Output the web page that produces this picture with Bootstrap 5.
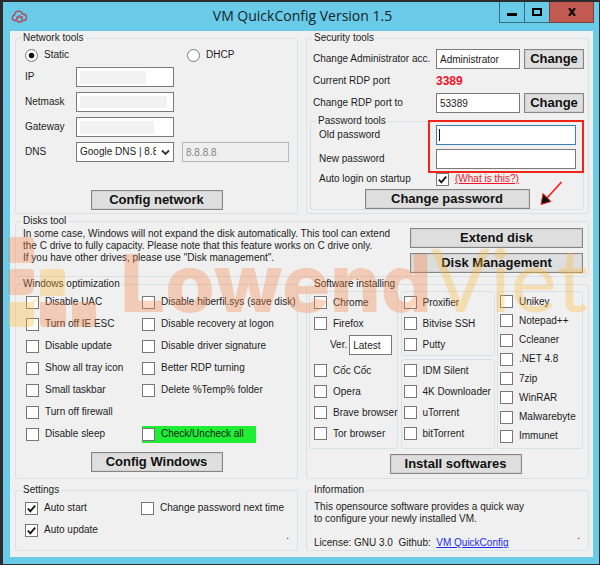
<!DOCTYPE html>
<html lang="en">
<head>
<meta charset="utf-8">
<meta name="viewport" content="width=device-width, initial-scale=1">
<title>VM QuickConfig Version 1.5</title>
<link href="https://cdn.jsdelivr.net/npm/bootstrap@5.3.0/dist/css/bootstrap.min.css" rel="stylesheet">
<style>
body { background: #2c2c2f; font: 10px/14px "Liberation Sans", Arial, sans-serif; color: #1c1c1c; padding: 2px 1px 1px 3px; }
.win { background: #6acbe8; }
.titlebar { display: grid; grid-template-columns: 1fr auto 1fr; height: 29px; padding: 0 5px 0 8px; }
.titlebar h1 { font: 14px/28px "Open Sans", "Noto Sans", sans-serif; color: #14242a; }
.winbtns button { height: 21px; width: 26px; padding: 0; border: 1px solid #3a6f80; border-top: 0; background: transparent; margin-left: -1px; display: flex; align-items: center; justify-content: center; }
.winbtns button.close-win { width: 45px; background: #c35a52; border-color: #7b3f3c; }
.client { background: #f0f0f0; margin: 0 6px 0 7px; padding: 0 4px 6px 5px; }
.frame { border-bottom: 7px solid #6acbe8; }
.group { border: 1px solid #d6e1e8; border-radius: 3px; min-width: 0; }
.group > legend { float: none; width: auto; font-size: 10px; line-height: 14px; margin: 0 0 0 5px; padding: 0 2px; }
.side { flex: 1 1 0; }
.txt, .pick { height: 20px; border: 1px solid #7a7a7a; border-radius: 0; padding: 0 3px; font-size: 10px; line-height: 18px; color: #1c1c1c; background-color: #fff; min-width: 0; }
.txt:disabled { background: #efefef; border-color: #b5b8bd; color: #858585; }
.txt:focus { outline: 0; }
.txt.current { border-color: #3f7fae; background: linear-gradient(#111, #111) 2px 3px / 1px 12px no-repeat #fff; }
.hid { background: linear-gradient(#f2f2f2, #f2f2f2) 3px 3px / 66px 13px no-repeat #fff; }
.hid-wide { background-size: 87px 12px; }
.hid-mid { background-size: 74px 13px; }
.pick { padding-right: 17px; background-size: 9px 7px; background-position: right 3px center; background-image: url("data:image/svg+xml,%3Csvg xmlns='http://www.w3.org/2000/svg' viewBox='0 0 9 7'%3E%3Cpath d='M1 1.5l3.5 3.5L8 1.5' fill='none' stroke='%23333' stroke-width='1.8'/%3E%3C/svg%3E"); text-overflow: clip; }
.cmd { border: 1px solid #858585; border-radius: 0; background: #dedede; color: #111; font: bold 13px/18px "Liberation Sans", Arial, sans-serif; padding: 0; height: 20px; box-shadow: inset 0 0 0 1px #d2d2d2; }
.cmd-mid { width: 132px; }
.cmd-small { width: 60px; }
.cmd-pass { width: 165px; }
.netgrid { display: grid; grid-template-columns: 51px 98px 1fr; row-gap: 5px; align-items: center; }
.netbody { padding: 0 8px 0 9px; }
.choices { height: 22px; display: grid; grid-template-columns: 162px 1fr; }
.tick { display: flex; align-items: center; gap: 6px; min-height: 0; margin: 0; padding: 0; white-space: nowrap; }
.tick .form-check-input { float: none; margin: 0; width: 13px; height: 13px; flex: none; border: 1px solid #777; background-color: #fff; }
.form-check-input[type=checkbox] { border-radius: 0; }
.form-check-input[type=checkbox]:checked { background-color: #fff; border-color: #777; background-image: url("data:image/svg+xml,%3Csvg xmlns='http://www.w3.org/2000/svg' viewBox='0 0 12 12'%3E%3Cpath d='M2 6l2.7 3L10 2.8' fill='none' stroke='%23111' stroke-width='2'/%3E%3C/svg%3E"); }
.form-check-input[type=radio]:checked { background-color: #fff; border-color: #777; background-image: url("data:image/svg+xml,%3Csvg xmlns='http://www.w3.org/2000/svg' viewBox='0 0 12 12'%3E%3Ccircle cx='6' cy='6' r='3' fill='%23111'/%3E%3C/svg%3E"); }
.choices .tick { height: 20px; }
.secgrid { padding: 3px 0 0 6px; }
.secrow { display: grid; grid-template-columns: 119px 84px 60px; column-gap: 4px; height: 22px; align-items: center; }
.port { color: #f0142a; font: bold 12px/16px "Liberation Sans", Arial, sans-serif; }
.passgroup { margin: 0 4px 3px 3px; }
.passbody { margin-top: -5px; }
.passrow { display: grid; grid-template-columns: 117px 1fr; height: 24px; align-items: center; padding: 0 7px 0 8px; }
.autorow { height: 18px; padding-bottom: 2px; }
.ring { position: absolute; left: 117px; right: -1px; top: -3px; height: 53px; border: 2px solid #f0251a; pointer-events: none; }
.pointer { position: absolute; right: 20px; bottom: 2px; width: 24px; height: 28px; }
.warn { color: #f0142a; text-decoration: underline; }
.info-link { color: #1a2bf0; text-decoration: underline; }
.note { line-height: 12px; }
.diskbody { padding: 0 5px 3px 7px; }
.diskcmds { width: 173px; flex: none; gap: 5px; }
.opts { display: grid; grid-template-columns: 116px 1fr; padding: 0 0 7px 10px; }
.opts .tick { height: 22px; }
.opts .all { background: #1fee35; height: 17px; width: 114px; align-self: center; }
.soft { display: grid; grid-template-columns: 89px 94px 86px; justify-content: space-between; height: 158px; margin: 0 5px 5px 2px; }
.subbox { border: 1px solid #d6e1e8; border-radius: 3px; }
.list { padding-left: 4px; }
.list-mid { padding-left: 2px; }
.list .tick { height: 21px; }
.list-tight { padding: 0 0 2px 2px; }
.list-tight .tick { flex: 1 1 0; }
.ver { padding-left: 16px; gap: 2px; height: 22px; }
.ver .txt { width: 43px; }
.lastrow { margin-top: 4px; }
.sets { display: grid; grid-template-columns: 116px 1fr; padding: 0 0 9px 9px; }
.sets .tick { height: 22px; }
.infobody { padding: 4px 7px 0; }
.watermark { position: absolute; left: 0; top: 225px; width: 100%; pointer-events: none; }
.dotmark { position: absolute; right: 8px; top: 32px; }
</style>
<script src="https://cdn.jsdelivr.net/npm/bootstrap@5.3.0/dist/js/bootstrap.bundle.min.js"></script>
</head>
<body>
<main class="win">
  <header class="titlebar">
    <div class="d-flex align-items-center">
      <svg width="17" height="14" viewBox="0 0 17 14" fill="none" stroke="#b5415a" stroke-width="1.3" aria-hidden="true"><path d="M5 10.5H3.6A2.7 2.7 0 0 1 3.4 5.200C3.700 2.500 5.500 1.200 7.600 1.200c2 0 3.400 1 4 2.800 2.200 0 3.900 1.200 3.900 3.500 0 1.800-1.200 3-3 3H12"/><circle cx="8.500" cy="9.500" r="2.700"/><path d="M5.500 6.500l1 1M11.500 6.500l-1 1M8.500 5v2"/></svg>
    </div>
    <h1 class="m-0">VM QuickConfig Version 1.5</h1>
    <div class="winbtns d-flex justify-content-end">
      <button type="button" aria-label="Minimize"><svg width="10" height="12"><path d="M0 8.500h10" stroke="#000" stroke-width="3"/></svg></button>
      <button type="button" aria-label="Maximize"><svg width="10" height="8"><rect x="1" y="1" width="8" height="6" fill="none" stroke="#000" stroke-width="2"/></svg></button>
      <button type="button" class="close-win" aria-label="Close"><svg width="8" height="8"><path d="M1 0l6 8M7 0L1 8" stroke="#111" stroke-width="2.200"/></svg></button>
    </div>
  </header>
  <div class="frame">
  <div class="client">
    <div class="d-flex gap-2">
      <fieldset class="group side">
        <legend>Network tools</legend>
        <div class="netbody">
          <div class="choices">
            <div class="form-check tick"><input class="form-check-input" type="radio" name="mode" id="static" checked><label class="form-check-label" for="static">Static</label></div>
            <div class="form-check tick"><input class="form-check-input" type="radio" name="mode" id="dhcp"><label class="form-check-label" for="dhcp">DHCP</label></div>
          </div>
          <div class="netgrid">
            <label for="ip">IP</label><input class="txt hid" id="ip" type="text"><span></span>
            <label for="mask">Netmask</label><input class="txt hid hid-wide" id="mask" type="text"><span></span>
            <label for="gw">Gateway</label><input class="txt hid hid-mid" id="gw" type="text"><span></span>
            <label for="dns">DNS</label><select class="form-select pick" id="dns"><option>Google DNS | 8.8.8.8</option></select><input class="txt ms-2" type="text" value="8.8.8.8" aria-label="DNS address" disabled>
          </div>
        </div>
        <div class="text-center pt-4"><button type="button" class="btn cmd cmd-mid mt-1">Config network</button></div>
      </fieldset>
      <fieldset class="group side">
        <legend>Security tools</legend>
        <div class="secgrid">
          <div class="secrow"><label for="adm">Change Administrator acc.</label><input class="txt" id="adm" type="text" value="Administrator"><button type="button" class="btn cmd cmd-small">Change</button></div>
          <div class="secrow"><span>Current RDP port</span><strong class="port">3389</strong></div>
          <div class="secrow"><label for="port">Change RDP port to</label><input class="txt" id="port" type="text" value="53389"><button type="button" class="btn cmd cmd-small">Change</button></div>
        </div>
        <fieldset class="group passgroup">
          <legend>Password tools</legend>
          <div class="passbody position-relative">
            <div class="passrow"><label for="old">Old password</label><input class="txt current" id="old" type="password"></div>
            <div class="passrow"><label for="new">New password</label><input class="txt" id="new" type="password"></div>
            <div class="passrow autorow"><label for="auto">Auto login on startup</label><div class="tick"><input class="form-check-input" type="checkbox" id="auto" checked><a class="warn" href="#">(What is this?)</a></div></div>
            <div class="text-center"><button type="button" class="btn cmd cmd-pass">Change password</button></div>
            <div class="ring"></div>
            <svg class="pointer" viewBox="0 0 24 28" aria-hidden="true"><path d="M22.500 3L8 19" stroke="#f0251a" stroke-width="1.800"/><path d="M2 25.500L4 14.500 12 22.500z" fill="#111" stroke="#f0251a" stroke-width="1"/></svg>
          </div>
        </fieldset>
      </fieldset>
    </div>

    <fieldset class="group">
      <legend>Disks tool</legend>
      <div class="diskbody d-flex justify-content-between">
        <p class="note m-0">In some case, Windows will not expand the disk automatically. This tool can extend<br>the C drive to fully capacity. Please note that this feature works on C drive only.<br>If you have other drives, please use "Disk management".</p>
        <div class="diskcmds d-grid">
          <button type="button" class="btn cmd">Extend disk</button>
          <button type="button" class="btn cmd">Disk Management</button>
        </div>
      </div>
    </fieldset>

    <div class="d-flex gap-2">
      <fieldset class="group side">
        <legend>Windows optimization</legend>
        <div class="opts">
          <div class="form-check tick"><input class="form-check-input" type="checkbox" id="o1"><label for="o1">Disable UAC</label></div>
          <div class="form-check tick"><input class="form-check-input" type="checkbox" id="o2"><label for="o2">Disable hiberfil.sys (save disk)</label></div>
          <div class="form-check tick"><input class="form-check-input" type="checkbox" id="o3"><label for="o3">Turn off IE ESC</label></div>
          <div class="form-check tick"><input class="form-check-input" type="checkbox" id="o4"><label for="o4">Disable recovery at logon</label></div>
          <div class="form-check tick"><input class="form-check-input" type="checkbox" id="o5"><label for="o5">Disable update</label></div>
          <div class="form-check tick"><input class="form-check-input" type="checkbox" id="o6"><label for="o6">Disable driver signature</label></div>
          <div class="form-check tick"><input class="form-check-input" type="checkbox" id="o7"><label for="o7">Show all tray icon</label></div>
          <div class="form-check tick"><input class="form-check-input" type="checkbox" id="o8"><label for="o8">Better RDP turning</label></div>
          <div class="form-check tick"><input class="form-check-input" type="checkbox" id="o9"><label for="o9">Small taskbar</label></div>
          <div class="form-check tick"><input class="form-check-input" type="checkbox" id="o10"><label for="o10">Delete %Temp% folder</label></div>
          <div class="form-check tick"><input class="form-check-input" type="checkbox" id="o11"><label for="o11">Turn off firewall</label></div>
          <span></span>
          <div class="form-check tick"><input class="form-check-input" type="checkbox" id="o12"><label for="o12">Disable sleep</label></div>
          <div class="form-check tick all"><input class="form-check-input" type="checkbox" id="o13"><label for="o13">Check/Uncheck all</label></div>
        </div>
        <div class="text-center"><button type="button" class="btn cmd cmd-mid">Config Windows</button></div>
      </fieldset>
      <fieldset class="group side pb-1">
        <legend>Software installing</legend>
        <div class="soft">
          <div class="subbox list">
            <div class="form-check tick"><input class="form-check-input" type="checkbox" id="s1"><label for="s1">Chrome</label></div>
            <div class="form-check tick"><input class="form-check-input" type="checkbox" id="s2"><label for="s2">Firefox</label></div>
            <div class="ver d-flex align-items-center"><label for="ver">Ver.</label><input class="txt" id="ver" type="text" value="Latest"></div>
            <div class="pt-1">
              <div class="form-check tick"><input class="form-check-input" type="checkbox" id="s3"><label for="s3">Cốc Cốc</label></div>
              <div class="form-check tick"><input class="form-check-input" type="checkbox" id="s4"><label for="s4">Opera</label></div>
              <div class="form-check tick"><input class="form-check-input" type="checkbox" id="s5"><label for="s5">Brave browser</label></div>
              <div class="form-check tick"><input class="form-check-input" type="checkbox" id="s6"><label for="s6">Tor browser</label></div>
            </div>
          </div>
          <div class="d-flex flex-column justify-content-between">
            <div class="subbox list list-mid">
              <div class="form-check tick"><input class="form-check-input" type="checkbox" id="t1"><label for="t1">Proxifier</label></div>
              <div class="form-check tick"><input class="form-check-input" type="checkbox" id="t2"><label for="t2">Bitvise SSH</label></div>
              <div class="form-check tick"><input class="form-check-input" type="checkbox" id="t3"><label for="t3">Putty</label></div>
            </div>
            <div class="subbox list list-mid pb-1">
              <div class="form-check tick"><input class="form-check-input" type="checkbox" id="t4"><label for="t4">IDM Silent</label></div>
              <div class="form-check tick"><input class="form-check-input" type="checkbox" id="t5"><label for="t5">4K Downloader</label></div>
              <div class="form-check tick"><input class="form-check-input" type="checkbox" id="t6"><label for="t6">uTorrent</label></div>
              <div class="form-check tick"><input class="form-check-input" type="checkbox" id="t7"><label for="t7">bitTorrent</label></div>
            </div>
          </div>
          <div class="subbox list-tight d-flex flex-column">
            <div class="form-check tick"><input class="form-check-input" type="checkbox" id="u1"><label for="u1">Unikey</label></div>
            <div class="form-check tick"><input class="form-check-input" type="checkbox" id="u2"><label for="u2">Notepad++</label></div>
            <div class="form-check tick"><input class="form-check-input" type="checkbox" id="u3"><label for="u3">Ccleaner</label></div>
            <div class="form-check tick"><input class="form-check-input" type="checkbox" id="u4"><label for="u4">.NET 4.8</label></div>
            <div class="form-check tick"><input class="form-check-input" type="checkbox" id="u5"><label for="u5">7zip</label></div>
            <div class="form-check tick"><input class="form-check-input" type="checkbox" id="u6"><label for="u6">WinRAR</label></div>
            <div class="form-check tick"><input class="form-check-input" type="checkbox" id="u7"><label for="u7">Malwarebyte</label></div>
            <div class="form-check tick"><input class="form-check-input" type="checkbox" id="u8"><label for="u8">Immunet</label></div>
          </div>
        </div>
        <div class="text-center ps-3"><button type="button" class="btn cmd cmd-mid">Install softwares</button></div>
      </fieldset>
    </div>

    <div class="lastrow d-flex gap-2">
      <fieldset class="group side position-relative">
        <legend>Settings</legend>
        <div class="sets">
          <div class="form-check tick"><input class="form-check-input" type="checkbox" id="g1" checked><label for="g1">Auto start</label></div>
          <div class="form-check tick"><input class="form-check-input" type="checkbox" id="g2"><label for="g2">Change password next time</label></div>
          <div class="form-check tick"><input class="form-check-input" type="checkbox" id="g3" checked><label for="g3">Auto update</label></div>
        </div>
        <span class="dotmark">.</span>
      </fieldset>
      <fieldset class="group side position-relative">
        <legend>Information</legend>
        <div class="infobody">
          <p class="note mb-2 pb-1">This opensource software provides a quick way<br>to configure your newly installed VM.</p>
          <p class="note m-0">License: GNU 3.0 &nbsp;Github: &nbsp;<a class="info-link" href="#">VM QuickConfig</a></p>
        </div>
        <span class="dotmark">.</span>
      </fieldset>
    </div>
  </div>
  </div>
</main>
<svg class="watermark" viewBox="0 0 600 110" aria-hidden="true">
  <g fill="#f58345" fill-opacity=".34">
    <rect x="8" y="12" width="26" height="26" rx="4"/>
    <path d="M12 44h18q4 0 4 4v13q0 9-9 9H12q-4 0-4-4V48q0-4 4-4z"/>
    <path d="M40 77h21q5 0 5 5v16q0 4-4 4H44q-4 0-4-4z"/>
    <rect x="72" y="77" width="24" height="25" rx="4"/>
    <text x="120" y="87" font-family="Inter" font-weight="800" font-size="80">Lowend</text>
  </g>
  <g fill="#fbb938" fill-opacity=".34">
    <path d="M44 44h17q4 0 4 4v19q0 4-4 4H44q-7 0-12 6H8v21q0 4 4 4h18q4 0 4-4V77q6-3 6-9V48q0-4 4-4z"/>
    <text x="431" y="87" font-family="Lato" font-weight="400" font-size="87">Viet</text>
  </g>
</svg>
</body>
</html>
